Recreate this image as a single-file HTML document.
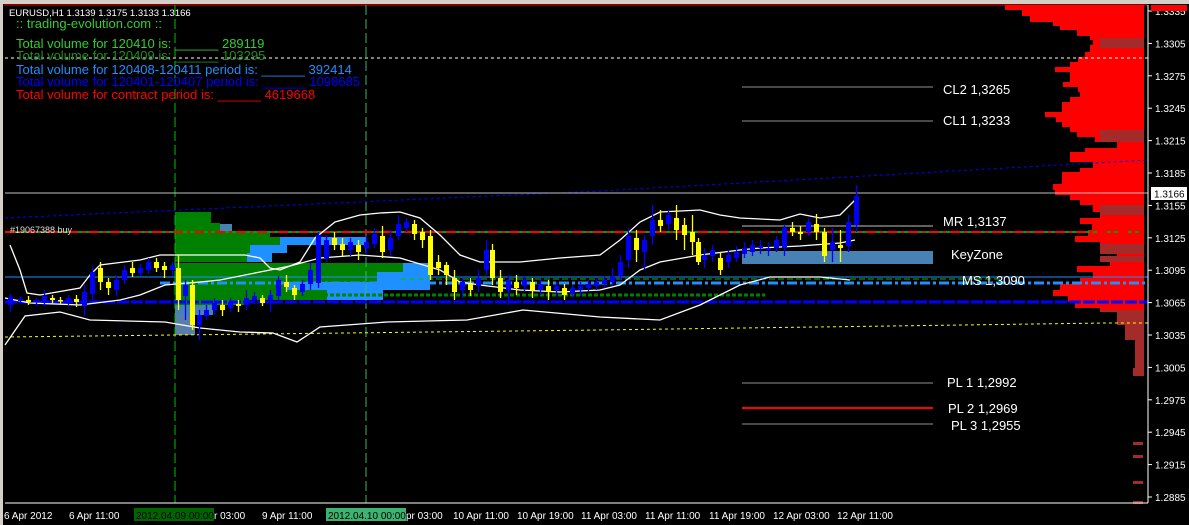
<!DOCTYPE html>
<html><head><meta charset="utf-8"><style>
html,body{margin:0;padding:0;background:#000;width:1189px;height:525px;overflow:hidden}
svg{display:block}
text{font-family:"Liberation Sans",sans-serif}
</style></head><body>
<svg id="s" width="1189" height="525" viewBox="0 0 1189 525" xmlns="http://www.w3.org/2000/svg">
<rect width="1189" height="525" fill="#000"/>
<rect x="0" y="0" width="1189" height="4" fill="#d4d0c8"/>
<rect x="0" y="0" width="3" height="525" fill="#d4d0c8"/>
<line x1="4" y1="5" x2="1148" y2="5" stroke="#f00" stroke-width="1"/>
<g id="prof"></g>
<!-- left volume profile -->
<g>
<rect x="175" y="212" width="36" height="11" fill="#008000"/>
<rect x="175" y="223" width="45" height="9" fill="#008000"/><rect x="220" y="224" width="12" height="8" fill="#4682b4"/>
<rect x="175" y="232" width="95" height="5" fill="#008000"/>
<rect x="280" y="237" width="87" height="8" fill="#1e90ff"/>
<rect x="175" y="237" width="105" height="8" fill="#008000"/>
<rect x="250" y="245" width="37" height="8" fill="#1e90ff"/>
<rect x="175" y="245" width="75" height="8" fill="#008000"/>
<rect x="247" y="253" width="25" height="9" fill="#1e90ff"/>
<rect x="175" y="253" width="72" height="9" fill="#008000"/>
<rect x="403" y="263" width="27" height="9" fill="#1e90ff"/>
<rect x="175" y="263" width="228" height="9" fill="#008000"/>
<rect x="377" y="272" width="53" height="10" fill="#1e90ff"/>
<rect x="175" y="272" width="202" height="10" fill="#008000"/>
<rect x="287" y="282" width="143" height="8" fill="#1e90ff"/>
<rect x="175" y="282" width="112" height="8" fill="#008000"/>
<rect x="327" y="290" width="56" height="10" fill="#1e90ff"/>
<rect x="175" y="290" width="152" height="10" fill="#008000"/>
<rect x="175" y="300" width="72" height="5" fill="#008000"/>
<rect x="175" y="305" width="38" height="10" fill="#4682b4"/>
<rect x="175" y="315" width="20" height="20" fill="#5a7ea8"/>
</g>
<!-- lines -->
<line x1="5" y1="58" x2="1148" y2="58" stroke="#fff" stroke-dasharray="3,3"/>
<line x1="175" y1="5" x2="175" y2="503" stroke="#00c000" stroke-dasharray="10,4"/>
<line x1="366" y1="5" x2="366" y2="503" stroke="#3cb371" stroke-dasharray="10,4"/>
<polyline points="5,218 600,191 1148,160" fill="none" stroke="#0000ff" stroke-dasharray="3,3"/>
<line x1="5" y1="193" x2="1148" y2="193" stroke="#c0c0c0"/>
<line x1="5" y1="232" x2="1144" y2="232" stroke="#00a000" stroke-width="2"/>
<line x1="5" y1="232" x2="1144" y2="232" stroke="#f00" stroke-width="2" stroke-dasharray="10,4,3,4"/>
<rect x="742" y="251" width="191" height="13" fill="#4682b4"/>
<line x1="5" y1="277" x2="1148" y2="277" stroke="#1e90ff"/>
<line x1="400" y1="279" x2="1000" y2="279" stroke="#00c000" stroke-dasharray="6,3"/>
<line x1="160" y1="283" x2="1148" y2="283" stroke="#1e90ff" stroke-width="3" stroke-dasharray="10,3,3,3"/>
<line x1="300" y1="295" x2="765" y2="295" stroke="#008000" stroke-width="3" stroke-dasharray="4,2"/>
<line x1="5" y1="302" x2="1148" y2="302" stroke="#0000ff" stroke-width="3" stroke-dasharray="12,2"/>
<polyline points="5,337 600,330 1105,323 1148,323" fill="none" stroke="#ffff00" stroke-dasharray="3,3"/>
<line x1="742" y1="87" x2="933" y2="87" stroke="#909090"/>
<line x1="742" y1="121" x2="933" y2="121" stroke="#909090"/>
<line x1="742" y1="226" x2="933" y2="226" stroke="#c0c0c0"/>
<line x1="742" y1="383" x2="933" y2="383" stroke="#909090"/>
<line x1="742" y1="408" x2="933" y2="408" stroke="#f00" stroke-width="2"/>
<line x1="742" y1="424" x2="933" y2="424" stroke="#909090"/>
<!-- bollinger -->
<g fill="none" stroke="#fff" stroke-width="1.3">
<polyline points="10,245 20,270 27,293 40,295 80,288 90,275 100,265 140,260 160,255 220,255 245,255 260,258 270,268 280,270 300,262 315,238 335,222 360,215 380,213 400,212 420,218 440,235 460,255 480,262 520,262 560,258 600,255 620,240 640,222 660,212 700,210 720,215 740,218 780,220 800,214 820,218 840,215 855,200"/>
<polyline points="5,298 30,303 80,305 120,300 140,295 165,285 200,282 220,280 260,272 290,266 320,258 360,255 400,258 440,270 460,282 480,285 520,290 560,292 600,290 620,285 640,270 660,262 700,255 740,250 760,248 800,246 840,243 855,240"/>
<polyline points="5,345 25,316 60,312 90,320 165,322 200,328 240,332 273,333 297,342 320,327 387,322 467,320 523,310 600,317 660,320 700,305 740,285 770,277 820,277 850,280"/>
</g>
<g id="cand"></g>
<!-- right axis -->
<line x1="1148" y1="5" x2="1148" y2="503" stroke="#fff"/>
<line x1="5" y1="503" x2="1148" y2="503" stroke="#fff"/>
<g font-size="10" fill="#fff" id="ax"></g>
<rect x="1151" y="187" width="36" height="13" fill="#fff"/>
<text x="1154" y="197.5" font-size="10" fill="#000">1.3166</text>
<rect x="1151" y="5" width="36" height="6" fill="#f00"/>
<!-- level texts -->
<g font-size="13" fill="#fff">
<text x="943" y="94">CL2 1,3265</text>
<text x="943" y="125">CL1 1,3233</text>
<text x="943" y="226">MR 1,3137</text>
<text x="951" y="259">KeyZone</text>
<text x="962" y="285">MS 1,3090</text>
<text x="947" y="387">PL 1 1,2992</text>
<text x="948" y="413">PL 2 1,2969</text>
<text x="951" y="430">PL 3 1,2955</text>
</g>
<text x="10" y="233" font-size="9" fill="#ddd">#19067388 buy</text>
<!-- top texts -->
<text x="9" y="16" font-size="9.5" fill="#fff">EURUSD,H1  1.3139 1.3175 1.3133 1.3166</text>
<g font-size="13">
<text x="16" y="28" fill="#32cd32">:: trading-evolution.com ::</text>
<text x="16" y="48" fill="#32cd32">Total volume for 120410 is: ______ 289119</text>
<text x="16" y="60" fill="#228b22">Total volume for 120409 is: ______ 103295</text>
<text x="16" y="74" fill="#1e90ff">Total volume for 120408-120411 period is: ______ 392414</text>
<text x="16" y="86" fill="#0000ff">Total volume for 120401-120407 period is: ______ 1098685</text>
<text x="16" y="99" fill="#ff0000">Total volume for contract period is: ______ 4619668</text>
</g>
<!-- bottom axis -->
<rect x="134" y="508" width="80" height="13" fill="#006400"/>
<rect x="326" y="508" width="80" height="13" fill="#3cb371"/>
<g font-size="10" fill="#fff">
<text x="4" y="519">6 Apr 2012</text>
<text x="69" y="519">6 Apr 11:00</text>
<text x="136" y="519" fill="#000">2012.04.09 00:00</text>
<text x="214" y="519">r 03:00</text>
<text x="262" y="519">9 Apr 11:00</text>
<text x="328" y="519" fill="#000">2012.04.10 00:00</text>
<text x="406" y="519">pr 03:00</text>
<text x="453" y="519">10 Apr 11:00</text>
<text x="517" y="519">10 Apr 19:00</text>
<text x="581" y="519">11 Apr 03:00</text>
<text x="645" y="519">11 Apr 11:00</text>
<text x="709" y="519">11 Apr 19:00</text>
<text x="773" y="519">12 Apr 03:00</text>
<text x="837" y="519">12 Apr 11:00</text>
</g>
</svg>
<script>
var NS="http://www.w3.org/2000/svg";
function el(p,t,a){var e=document.createElementNS(NS,t);for(var k in a)e.setAttribute(k,a[k]);p.appendChild(e);return e;}
var C=[[8,305,297,294,312],[18,301,299,296,303],[26,300,302,296,305],[34,302,300,298,306],[42,303,296,290,306],[50,298,300,295,304],[58,300,301,297,304],[66,302,298,295,305],[74,299,302,295,307],[82,306,292,285,316],[90,294,272,266,300],[98,268,282,262,290],[106,282,288,278,295],[114,290,280,275,296],[122,280,270,265,284],[130,268,273,262,277],[138,273,268,264,276],[146,270,262,258,274],[154,262,268,258,272],[162,266,270,262,278],[170,270,265,262,276],[176,268,300,255,310],[183,296,285,280,320],[190,285,325,280,330],[197,325,315,310,340],[204,316,310,305,320],[212,310,303,298,315],[220,305,310,300,316],[228,308,302,298,312],[236,304,306,300,312],[244,305,298,290,310],[252,300,296,292,304],[260,298,303,295,306],[268,300,295,290,312],[276,296,280,276,300],[284,282,287,275,292],[292,288,295,285,300],[300,292,284,280,296],[308,284,270,262,290],[316,283,235,232,288],[324,258,240,235,262],[332,238,245,232,250],[340,244,250,238,256],[348,250,242,238,256],[356,245,252,240,260],[364,248,242,236,254],[372,244,234,228,248],[380,236,252,226,258],[388,250,238,230,256],[396,236,224,215,240],[404,228,222,218,232],[412,224,234,220,240],[420,232,240,228,248],[428,236,275,230,280],[436,262,268,255,275],[444,265,275,262,285],[452,278,292,270,300],[460,290,282,278,298],[468,284,290,278,296],[476,286,278,270,292],[484,270,250,240,275],[490,250,278,244,285],[498,278,292,270,298],[506,290,280,275,305],[514,282,288,275,295],[522,286,280,276,292],[530,282,290,278,298],[538,290,284,280,295],[546,286,292,280,300],[554,290,286,282,296],[562,288,295,284,300],[570,294,288,285,298],[578,290,286,282,296],[586,288,284,280,292],[594,286,282,278,290],[602,284,280,276,288],[610,282,276,268,286],[618,276,262,255,280],[626,260,236,228,268],[634,238,250,230,262],[642,252,240,235,270],[650,236,220,205,245],[658,220,226,210,232],[666,224,215,210,230],[674,218,230,205,240],[682,225,235,218,250],[690,232,242,215,255],[696,242,262,238,265],[702,260,255,248,268],[710,256,250,245,262],[718,258,270,252,275],[726,262,255,250,268],[734,258,252,246,262],[742,254,248,242,258],[750,252,245,240,256],[758,248,246,240,254],[766,250,248,242,256],[774,248,240,236,252],[782,248,228,224,256],[790,228,232,222,236],[798,232,234,226,240],[806,232,222,218,236],[814,224,232,214,240],[822,232,256,228,262],[830,250,242,228,262],[838,245,248,230,262],[846,246,222,215,252],[854,225,196,185,232]];
var g=document.getElementById("cand");
C.forEach(function(c){var col=c[2]<c[1]?"#0000ff":"#ffff00";var t=Math.min(c[1],c[2]),b=Math.max(c[1],c[2]);
el(g,"line",{x1:c[0]+2.5,y1:c[3],x2:c[0]+2.5,y2:c[4],stroke:col,"stroke-width":1.3});
el(g,"rect",{x:c[0],y:t,width:5,height:Math.max(b-t,1.5),fill:col});});
var R=[[5,1005],[10,1022],[16,1030],[22,1053],[26,1060],[30,1077],[36,1090],[40,1093],[45,1090],[52,1085],[57,1078],[62,1070],[67,1055],[72,1070],[77,1070],[82,1063],[87,1078],[92,1080],[97,1070],[102,1062],[107,1062],[112,1045],[117,1056],[122,1062],[127,1070],[132,1077],[137,1095],[142,1117],[148,1085],[152,1070],[156,1070],[162,1093],[168,1080],[172,1062],[178,1062],[184,1053],[190,1055],[195,1070],[200,1080],[205,1093],[212,1100],[218,1080],[224,1092],[230,1088],[236,1075],[242,1100],[248,1117],[254,1117],[260,1110],[266,1077],[272,1093],[278,1080],[284,1060],[290,1053],[296,1068],[302,1075],[308,1100],[312,1117],[325,1125],[340,1135],[375,1144]];
var p=document.getElementById("prof");
for(var i=0;i<R.length-1;i++){var col=R[i][0]>=310?"#a52a2a":"#ff0000";el(p,"rect",{x:R[i][1],y:R[i][0],width:1144-R[i][1],height:R[i+1][0]-R[i][0],fill:col});}
[[38,48],[130,142],[205,212],[210,215],[244,254],[256,262],[310,312]].forEach(function(d){el(p,"rect",{x:1100,y:d[0],width:44,height:d[1]-d[0],fill:"#a52a2a"});});
el(p,"rect",{x:1133,y:368,width:11,height:8,fill:"#a52a2a"});
[443,456,482,502].forEach(function(y){el(p,"rect",{x:1133,y:y-1,width:10,height:3,fill:"#a52a2a"});});
var A=["1.3335","1.3305","1.3275","1.3245","1.3215","1.3185","1.3155","1.3125","1.3095","1.3065","1.3035","1.3005","1.2975","1.2945","1.2915","1.2885"];
var ax=document.getElementById("ax");
A.forEach(function(v,i){var y=11+i*32.4;el(ax,"line",{x1:1148,y1:y,x2:1152,y2:y,stroke:"#fff"});var t=el(ax,"text",{x:1155,y:y+4});t.textContent=v;});
</script>
</body></html>
